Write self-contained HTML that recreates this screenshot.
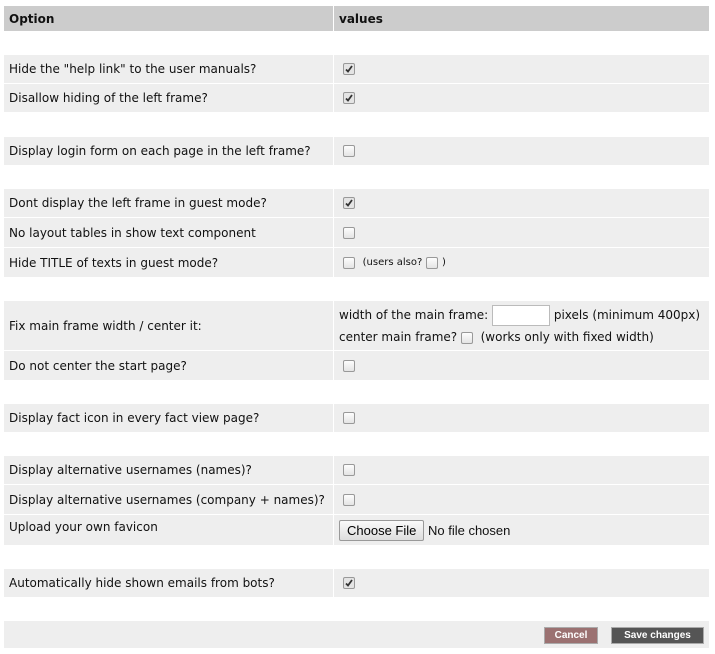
<!DOCTYPE html>
<html><head><style>
body{margin:0;background:#fff;font-family:"DejaVu Sans",Verdana,sans-serif;font-size:12px;color:#111;}
.r{position:absolute;left:4px;width:705px;background:#eee;}
.h{background:#ccc;font-weight:bold;}
.l{position:absolute;left:0;width:328px;top:0;bottom:0;display:flex;align-items:center;padding-left:5px;white-space:nowrap;}
.v{position:absolute;left:329px;right:0;top:0;bottom:0;border-left:1px solid #fff;display:flex;align-items:center;padding-left:9px;white-space:nowrap;}
.cb{display:inline-block;width:10px;height:10px;border:1px solid #999;border-radius:2px;background:linear-gradient(#fdfdfd,#e4e4e4);position:relative;vertical-align:middle;}
.cb.c{background:#e4e4e4}
.cb svg{position:absolute;left:1px;top:1px}
.sm{font-size:10px;}
.btn{position:absolute;top:6px;height:15px;font-family:"Liberation Sans",Arial,sans-serif;font-weight:bold;font-size:10px;color:#fff;text-align:center;line-height:15px;border:1px solid #aaa;}
</style></head><body>
<div class="r h" style="top:6px;height:25px"><div class="l">Option</div><div class="v" style="padding-left:5px">values</div></div>
<div class="r" style="top:55px;height:28px"><div class="l">Hide the "help link" to the user manuals?</div><div class="v"><span class="cb c"><svg width="8" height="8"><path d="M1 4.5L3 6.5L7 1" stroke="#333" stroke-width="1.8" fill="none"/></svg></span></div></div>
<div class="r" style="top:84px;height:28px"><div class="l">Disallow hiding of the left frame?</div><div class="v"><span class="cb c"><svg width="8" height="8"><path d="M1 4.5L3 6.5L7 1" stroke="#333" stroke-width="1.8" fill="none"/></svg></span></div></div>
<div class="r" style="top:137px;height:28px"><div class="l">Display login form on each page in the left frame?</div><div class="v"><span class="cb"></span></div></div>
<div class="r" style="top:189px;height:28px"><div class="l">Dont display the left frame in guest mode?</div><div class="v"><span class="cb c"><svg width="8" height="8"><path d="M1 4.5L3 6.5L7 1" stroke="#333" stroke-width="1.8" fill="none"/></svg></span></div></div>
<div class="r" style="top:218px;height:29px"><div class="l">No layout tables in show text component</div><div class="v"><span class="cb"></span></div></div>
<div class="r" style="top:248px;height:29px"><div class="l">Hide TITLE of texts in guest mode?</div><div class="v"><span class="cb"></span>&nbsp;&nbsp;<span class="sm">(users also?</span>&nbsp;<span class="cb"></span>&nbsp;<span class="sm">)</span></div></div>
<div class="r" style="top:301px;height:49px"><div class="l">Fix main frame width / center it:</div><div class="v" style="padding-left:5px;display:block;line-height:22px;padding-top:3px">width of the main frame: <span style="display:inline-block;width:56px;height:19px;border:1px solid #bbb;background:#fff;vertical-align:middle"></span> pixels (minimum 400px)<br>center main frame? <span class="cb"></span>&nbsp; (works only with fixed width)</div></div>
<div class="r" style="top:351px;height:29px"><div class="l">Do not center the start page?</div><div class="v"><span class="cb"></span></div></div>
<div class="r" style="top:404px;height:28px"><div class="l">Display fact icon in every fact view page?</div><div class="v"><span class="cb"></span></div></div>
<div class="r" style="top:456px;height:28px"><div class="l">Display alternative usernames (names)?</div><div class="v"><span class="cb"></span></div></div>
<div class="r" style="top:485px;height:29px"><div class="l">Display alternative usernames (company + names)?</div><div class="v"><span class="cb"></span></div></div>
<div class="r" style="top:515px;height:30px"><div class="l" style="align-items:flex-start;padding-top:5px">Upload your own favicon</div><div class="v" style="padding-left:5px;font-family:'Liberation Sans',Arial,sans-serif;font-size:13px"><span style="display:inline-block;border:1px solid #999;border-radius:2px;background:linear-gradient(#fafafa,#ddd);padding:2px 7px;color:#000">Choose File</span>&nbsp;No file chosen</div></div>
<div class="r" style="top:569px;height:28px"><div class="l">Automatically hide shown emails from bots?</div><div class="v"><span class="cb c"><svg width="8" height="8"><path d="M1 4.5L3 6.5L7 1" stroke="#333" stroke-width="1.8" fill="none"/></svg></span></div></div>
<div class="r" style="top:621px;height:27px">
<div class="btn" style="left:540px;width:52px;background:#9b7171">Cancel</div>
<div class="btn" style="left:607px;width:91px;background:#555">Save changes</div>
</div>
</body></html>
